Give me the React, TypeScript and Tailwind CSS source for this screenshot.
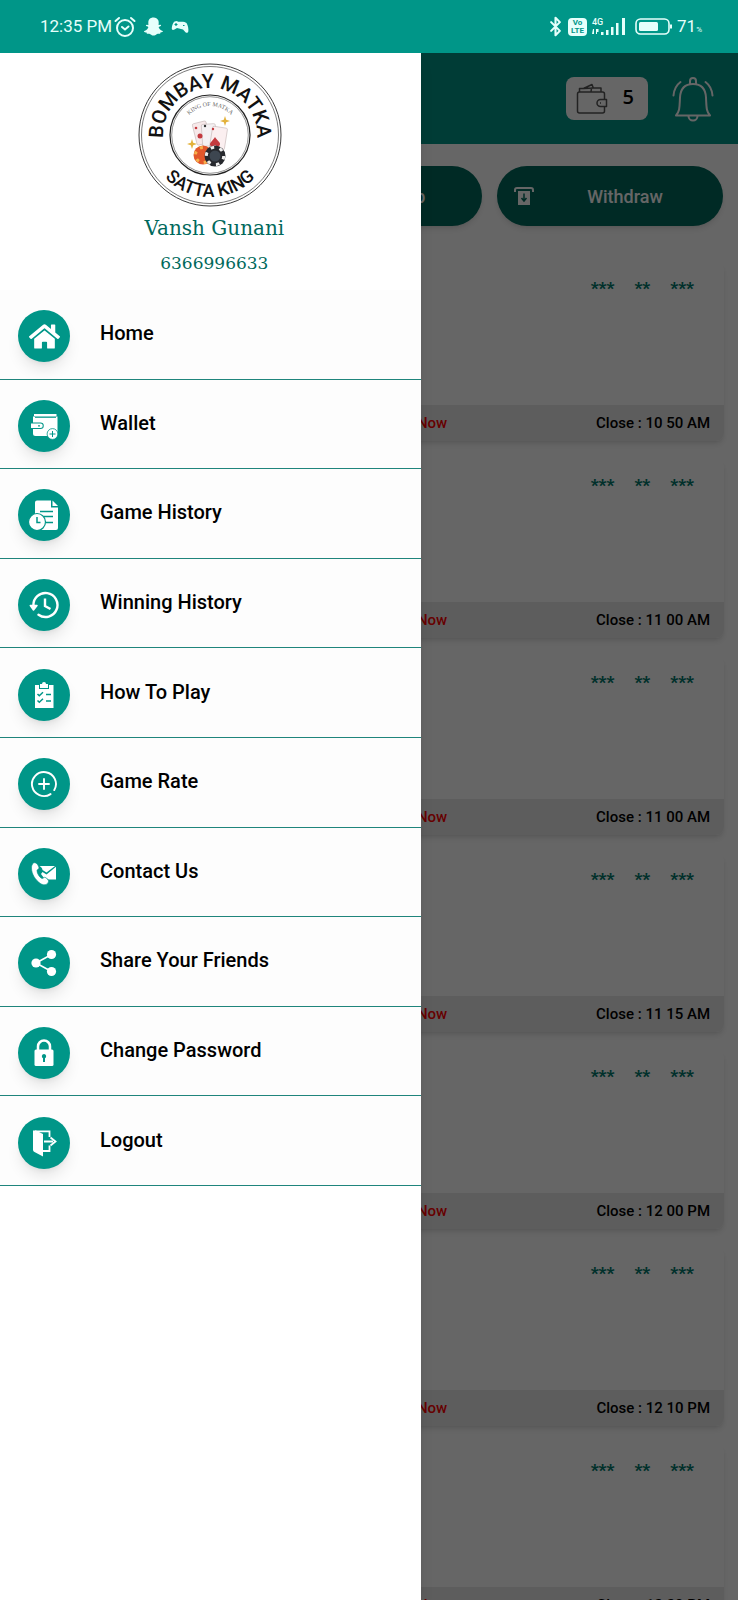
import { type ReactNode } from "react";
import { FaGamepad, FaHome, FaSnapchatGhost } from "react-icons/fa";
import { Bluetooth } from "lucide-react";

function WalletIcon() {
  return (
    <svg viewBox="0 0 30 30" className="h-[30px] w-[30px]" fill="currentColor">
      <path d="M5 3h22.500v2H5zM4 5.500h24.500v16.500h-2.500a5.200 5.200 0 0 0-7 3H6.500A2.500 2.500 0 0 1 4 22.500V18h7.500a2.800 2.800 0 0 0 0-6.500H4z" />
      <path d="M2 12.500h9.500a2.200 2.200 0 0 1 0 4.500H2z" />
      <circle cx="10" cy="14.800" r="0.900" fill="#009688" />
      <circle cx="23.500" cy="23" r="5.400" stroke="#009688" strokeWidth="0.800" />
      <path d="M23.500 20v6M20.500 23h6" stroke="#009688" strokeWidth="1" />
      <path d="M6 6.500h21" stroke="#009688" strokeWidth="0.800" />
    </svg>
  );
}

function GameHistoryIcon() {
  return (
    <svg viewBox="0 0 32 32" className="h-[32px] w-[32px]" fill="currentColor">
      <path d="M9 1.500h14v7h7V29a2 2 0 0 1-2 2H9a2 2 0 0 1-2-2V3.500a2 2 0 0 1 2-2z" />
      <path d="M24.500 1.500 30 7h-5.500z" />
      <path d="M12 12.500h13M16 17.500h9M18 23.500h7" stroke="#009688" strokeWidth="1.500" />
      <circle cx="9" cy="23" r="8.500" stroke="#009688" strokeWidth="1.200" />
      <path d="M9 18v5.500h3.500" fill="none" stroke="#009688" strokeWidth="1.500" />
    </svg>
  );
}

function WinningIcon() {
  return (
    <svg viewBox="0 0 30 30" className="h-[30px] w-[30px]" fill="none" stroke="currentColor" strokeWidth="2.400">
      <path d="M4.500 16A12 12 0 1 1 9.500 24.800" strokeLinecap="round" />
      <path d="m1.300 15.500 3.200 4.500 3.500-4.500z" fill="currentColor" strokeWidth="1.500" strokeLinejoin="round" />
      <path d="M16 8.500v7.500l5.500 3" />
    </svg>
  );
}

function ClipboardIcon() {
  return (
    <svg viewBox="0 0 28 28" className="h-[28px] w-[28px]" fill="currentColor">
      <path d="M5 4h4v4h10V4h4.500v23H5z" />
      <path d="M10 3h2a2 2 0 0 1 4 0h2v4h-8z" />
      <path d="m7.500 13 1.800 1.800 3.700-3.500M7.500 19.500l1.800 1.800 3.700-3.500M16 13.500h5M16 20h5" fill="none" stroke="#009688" strokeWidth="1.500" />
    </svg>
  );
}

function RateIcon() {
  return (
    <svg viewBox="0 0 28 28" className="h-[28px] w-[28px]" fill="none" stroke="currentColor" strokeWidth="1.900" strokeLinecap="round">
      <path d="M20.500 24.100A12 12 0 1 1 24.300 20.100" />
      <path d="M14 9v10M9 14h10" />
    </svg>
  );
}

function ContactIcon() {
  return (
    <svg viewBox="0 0 28 28" className="h-[28px] w-[28px]" fill="currentColor">
      <path d="M9.500 6H25l-8.500 6.500-4-2.500c0-2-1.500-3-3-4z" />
      <path d="M26 6.800v12.700h-7.500c-1.500-1.500-3-2-4.500-1.500l-3-4 1.500-2 4 2.500z" />
      <path
        d="M3.500 3c3-1.500 5.500 3.500 5.500 5 0 1-2 1.500-2 2.500 0 3 2.500 7 5 8 1 .3 2-1.500 3-1.200 1.500.6 4 3 3.500 4.600-1.500 3.500-5.500 3.500-8.500 1.300C5.500 20 1.500 14 1.500 8c0-2 .5-4 2-5z"
        stroke="#009688"
        strokeWidth="0.600"
      />
    </svg>
  );
}

function ShareIcon() {
  return (
    <svg viewBox="0 0 28 28" className="h-[28px] w-[28px]" fill="currentColor">
      <path d="M21.500 5.500 6 14l15.500 8.500" fill="none" stroke="currentColor" strokeWidth="1.600" />
      <circle cx="21.500" cy="5.500" r="4.600" />
      <circle cx="6" cy="14" r="4.600" />
      <circle cx="21.500" cy="22.500" r="4.600" />
    </svg>
  );
}

function LockIcon() {
  return (
    <svg viewBox="0 0 28 28" className="h-[28px] w-[28px]" fill="currentColor">
      <path d="M8 12V7.500a6 6 0 0 1 12 0V12" fill="none" stroke="currentColor" strokeWidth="2.500" />
      <rect x="4.500" y="10.500" width="19" height="16.500" rx="1.500" />
      <path d="M14 15a2.300 2.300 0 0 1 1 4.300V23h-2v-3.700A2.300 2.300 0 0 1 14 15z" fill="#009688" />
    </svg>
  );
}

function LogoutIcon() {
  return (
    <svg viewBox="0 0 28 28" className="h-[28px] w-[28px]">
      <path d="M3 1.500h3l7 3.500v22.500l-8.500-4.500A2.500 2.500 0 0 1 3 21z" fill="currentColor" />
      <path d="M5 2.300h14.500V8M19.500 16.500V22H13M14 12.500h9" fill="none" stroke="currentColor" strokeWidth="1.800" />
      <path d="m20.500 8.500 5 4-5 4" fill="none" stroke="currentColor" strokeWidth="1.800" />
    </svg>
  );
}

const menu: { label: string; icon: ReactNode }[] = [
  { label: "Home", icon: <FaHome size={31} /> },
  { label: "Wallet", icon: <WalletIcon /> },
  { label: "Game History", icon: <GameHistoryIcon /> },
  { label: "Winning History", icon: <WinningIcon /> },
  { label: "How To Play", icon: <ClipboardIcon /> },
  { label: "Game Rate", icon: <RateIcon /> },
  { label: "Contact Us", icon: <ContactIcon /> },
  { label: "Share Your Friends", icon: <ShareIcon /> },
  { label: "Change Password", icon: <LockIcon /> },
  { label: "Logout", icon: <LogoutIcon /> },
];

const games = ["10 50 AM", "11 00 AM", "11 00 AM", "11 15 AM", "12 00 PM", "12 10 PM", "12 20 PM"];

function StatusBar() {
  return (
    <div className="flex h-[53px] shrink-0 items-center justify-between bg-[#009688] pr-9 pl-10 text-[#e6fffb]">
      <div className="flex items-center">
        <span className="w-[74px] text-[17px] whitespace-nowrap">12:35 PM</span>
        <svg viewBox="0 0 22 22" className="h-[22px] w-[22px]" fill="none" stroke="currentColor" strokeWidth="2" strokeLinecap="round">
          <circle cx="11" cy="12" r="8" />
          <path d="m8 11 3 2.500 3.500-3M1.500 5 5 2M20.500 5 17 2" />
        </svg>
        <FaSnapchatGhost size={19} className="ml-2" />
        <svg viewBox="0 0 18 14" className="ml-2 h-[14px] w-[18px]">
          <path
            d="M3.500 1.500 6 1l1 .8h5L13.500 2l2 1c1.500 2.500 2.200 6 1.800 8.500-.5 2-2.500 1.500-3.500 0L12 9.500 6 8l-2.500 1.500C2 10.500.5 10 .8 8c.2-2.500 1-5 2.700-6.500z"
            fill="currentColor"
          />
          <path d="M5 3v3M3.500 4.500h3M12 5.500h1.500" stroke="#009688" strokeWidth="1.200" />
        </svg>
      </div>
      <div className="flex items-center">
        <Bluetooth size={21} strokeWidth={2.4} />
        <span className="ml-[2px] flex h-[18px] w-[19px] flex-col items-center justify-center rounded-[4px] bg-[#e6fffb] text-[8px] leading-[8px] font-bold text-[#009688]">
          <span>Vo</span>
          <span>LTE</span>
        </span>
        <svg viewBox="0 0 36 20" className="ml-1 h-[20px] w-[36px]" fill="currentColor">
          <text x="1" y="7.500" fontSize="9" fontWeight="500" fontFamily="Roboto">4G</text>
          <path d="M2 12h1v5H1zM5 12h2.500v3H6v2H5zM10 15h2.500v3H10zM15 13h2.500v5H15zM20 10h2.500v8H20zM25 6h2.500v12H25zM31 1h3v17h-3z" />
        </svg>
        <svg viewBox="0 0 38 18" className="ml-2 h-[18px] w-[38px]">
          <rect x="1" y="1" width="33" height="15" rx="4.500" fill="none" stroke="currentColor" strokeWidth="1.600" />
          <rect x="4" y="4" width="19" height="9" rx="1.500" fill="currentColor" />
          <path d="M36 6.500v4" stroke="currentColor" strokeWidth="2" />
        </svg>
        <span className="ml-1 text-[17px]">
          71<span className="text-[8px]">%</span>
        </span>
      </div>
    </div>
  );
}

function Logo() {
  return (
    <svg viewBox="-72 -72 144 144" className="h-[144px] w-[144px]" role="img" aria-label="Bombay Matka Satta King">
      <defs>
        <path id="arc-top" d="M0 47A47 47 0 0 1 0 -47A47 47 0 0 1 0 47" />
        <path id="arc-bottom" d="M-62 0A62 62 0 0 0 62 0" />
        <path id="arc-inner" d="M-29 0A29 29 0 0 1 29 0" />
      </defs>
      <g fill="none" stroke="#222">
        <circle r="71" strokeWidth="0.900" />
        <circle r="68.500" strokeWidth="0.600" />
        <circle r="40" strokeWidth="1.200" />
        <circle r="38.300" strokeWidth="0.500" />
      </g>
      <g textAnchor="middle" fontFamily="Roboto" fontWeight="500" fill="#111">
        <text fontSize="20">
          <textPath href="#arc-top" startOffset="50%">BOMBAY MATKA</textPath>
        </text>
        <text fontSize="18">
          <textPath href="#arc-bottom" startOffset="50%">SATTA KING</textPath>
        </text>
      </g>
      <text textAnchor="middle" fontFamily="Liberation Serif" fontSize="6" fill="#666">
        <textPath href="#arc-inner" startOffset="50%">KING OF MATKA</textPath>
      </text>
      <g stroke="#b9a9a9" strokeWidth="0.500">
        <rect x="-15" y="-13" width="14" height="22" rx="1.500" fill="#f7e9ea" transform="rotate(-14 -8 0)" />
        <rect x="-8" y="-11" width="14" height="22" rx="1.500" fill="#f4f1f3" transform="rotate(-4 -1 0)" />
        <rect x="1" y="-8" width="15" height="22" rx="1.500" fill="#fbeff0" transform="rotate(9 8 3)" />
      </g>
      <g fill="#c33a3f">
        <circle cx="-14" cy="-7" r="1.300" />
        <circle cx="-10" cy="1" r="2.500" />
        <circle cx="3" cy="-6" r="1.200" />
        <path d="M5 2c2 3.500 5.500 5 5 7.500S6.500 12 5 10c-1.500 2-5 2-5-.5S3 5.500 5 2z" />
      </g>
      <circle cx="-5" cy="-9" r="1.200" fill="#333" />
      <circle cx="-7" cy="20" r="9.500" fill="#e2572b" />
      <circle cx="-7" cy="20" r="7.500" fill="none" stroke="#f6b04c" strokeWidth="3" strokeDasharray="3 5" />
      <circle cx="5" cy="21" r="10.500" fill="#26282d" />
      <circle cx="5" cy="21" r="8.700" fill="none" stroke="#eee" strokeWidth="3" strokeDasharray="3.500 5.600" />
      <circle cx="5" cy="21" r="5.500" fill="#3d4650" />
      <g fill="#e3b23c">
        <path d="M15-19l1.200 3.800L20-14l-3.800 1.200L15-9l-1.200-3.800L10-14l3.800-1.200z" />
        <path d="M-18 4l1.200 3.800L-13 9l-3.800 1.200L-18 14l-1.200-3.800L-23 9l3.800-1.200z" />
      </g>
    </svg>
  );
}

function TopBar() {
  return (
    <header className="flex h-[91px] shrink-0 items-center justify-end gap-6 bg-[#009688] pr-6">
      <button type="button" className="flex h-[43px] w-[82px] items-center justify-between rounded-lg bg-white pr-[14px] pl-[10px]">
        <svg viewBox="0 0 32 32" className="h-[32px] w-[32px]" fill="none" stroke="#555" strokeWidth="1.500" strokeLinejoin="round">
          <rect x="1.500" y="9" width="27" height="21" rx="2" />
          <path d="M3.500 9V5.500h4L16 1.500l1.500 4M7.500 5.500l10-.5M15 9l.5-4H25v4" />
          <path d="M30.500 16.500h-6a3.500 3.500 0 0 0 0 7h6z" fill="#fff" />
          <path d="M24 20h1" />
        </svg>
        <span className="pb-[3px] font-['Open_Sans'] text-[20px] font-semibold text-black">5</span>
      </button>
      <button type="button" aria-label="Notifications" className="text-white">
        <svg viewBox="0 0 42 46" className="h-[46px] w-[42px]" fill="none" stroke="currentColor" strokeWidth="2" strokeLinecap="round" strokeLinejoin="round">
          <path d="M4 39.500h34c-4-4.500-3.500-9-4-18C33.500 12.500 28.500 8 21 8S8.500 12.500 8 21.500c-.5 9 0 13.500-4 18z" />
          <path d="M18 8V5a3 3 0 0 1 6 0v3M16.500 40a4.500 4.500 0 0 0 9 0M8.500 6C4.500 9 2 13 1.500 19.500M33.500 6c4 3 6.500 7 7 13.500" />
        </svg>
      </button>
    </header>
  );
}

function ActionButton({ label, icon }: { label: string; icon?: ReactNode }) {
  return (
    <button type="button" className="flex h-[60px] items-center rounded-full bg-[#00695c] pr-6 pl-4 text-white shadow-md">
      <span className="w-[22px]">{icon}</span>
      <span className="flex-1 pl-4 text-[18px] font-medium">{label}</span>
    </button>
  );
}

function GameCard({ close }: { close: string }) {
  return (
    <article className="flex h-[179px] shrink-0 flex-col overflow-hidden rounded-lg bg-white shadow-md">
      <div className="flex flex-1 justify-end gap-5 pt-[14px] pr-[30px] text-[17px] leading-[24px] font-black text-[#00796b]">
        <span>***</span>
        <span>**</span>
        <span>***</span>
      </div>
      <div className="grid h-9 grid-cols-[1fr_auto_1fr] items-center bg-[#e9e9e9] px-[14px] text-[15px] font-medium">
        <span className="col-start-2 text-[#ff0000]">Betting is Running Now</span>
        <span className="text-right text-black">Close : {close}</span>
      </div>
    </article>
  );
}

function Drawer() {
  return (
    <aside className="absolute inset-y-0 left-0 w-[57%] bg-white shadow-lg">
      <div className="flex h-[237px] flex-col items-center pt-[10px] font-['DejaVu_Serif'] text-[#00695c]">
        <Logo />
        <p className="mt-1 pl-2 text-[20px] leading-[34px]">Vansh Gunani</p>
        <p className="pl-2 text-[17px] leading-[36px]">6366996633</p>
      </div>
      <nav className="flex h-[896px] flex-col">
        {menu.map((item) => (
          <a key={item.label} href="#" className="flex flex-1 items-center border-b border-[#1f857c] bg-[#fdfdfd] pt-1 pl-[18px]">
            <span className="flex h-[52px] w-[52px] items-center justify-center rounded-full bg-[#009688] text-white shadow-lg">
              {item.icon}
            </span>
            <span className="pb-[6px] pl-[30px] text-[20px] font-medium text-black">{item.label}</span>
          </a>
        ))}
      </nav>
    </aside>
  );
}

export default function App() {
  return (
    <div className="flex h-screen flex-col overflow-hidden bg-white font-['Roboto',sans-serif]">
      <StatusBar />
      <div className="relative flex min-h-0 flex-1 flex-col overflow-hidden">
        <TopBar />
        <div className="grid shrink-0 grid-cols-3 gap-[15px] px-[15px] pt-[22px]">
          <ActionButton label="Add Money" />
          <ActionButton label="WhatsApp" />
          <ActionButton
            label="Withdraw"
            icon={
              <svg viewBox="0 0 22 20" className="h-[20px] w-[22px]" fill="none" stroke="currentColor" strokeWidth="2">
                <path d="M2 6V4a2 2 0 0 1 2-2h14a2 2 0 0 1 2 2v2" />
                <path d="M5 5h12v14H5z" fill="currentColor" stroke="none" />
                <path d="M11 7.500v7M8.500 12l2.500 3 2.500-3" stroke="#00695c" strokeWidth="1.500" />
              </svg>
            }
          />
        </div>
        <main className="flex flex-col gap-[18px] px-[14px] pt-9">
          {games.map((close, i) => (
            <GameCard key={i} close={close} />
          ))}
        </main>
        <div className="absolute inset-0 bg-black/60" />
        <Drawer />
      </div>
    </div>
  );
}
